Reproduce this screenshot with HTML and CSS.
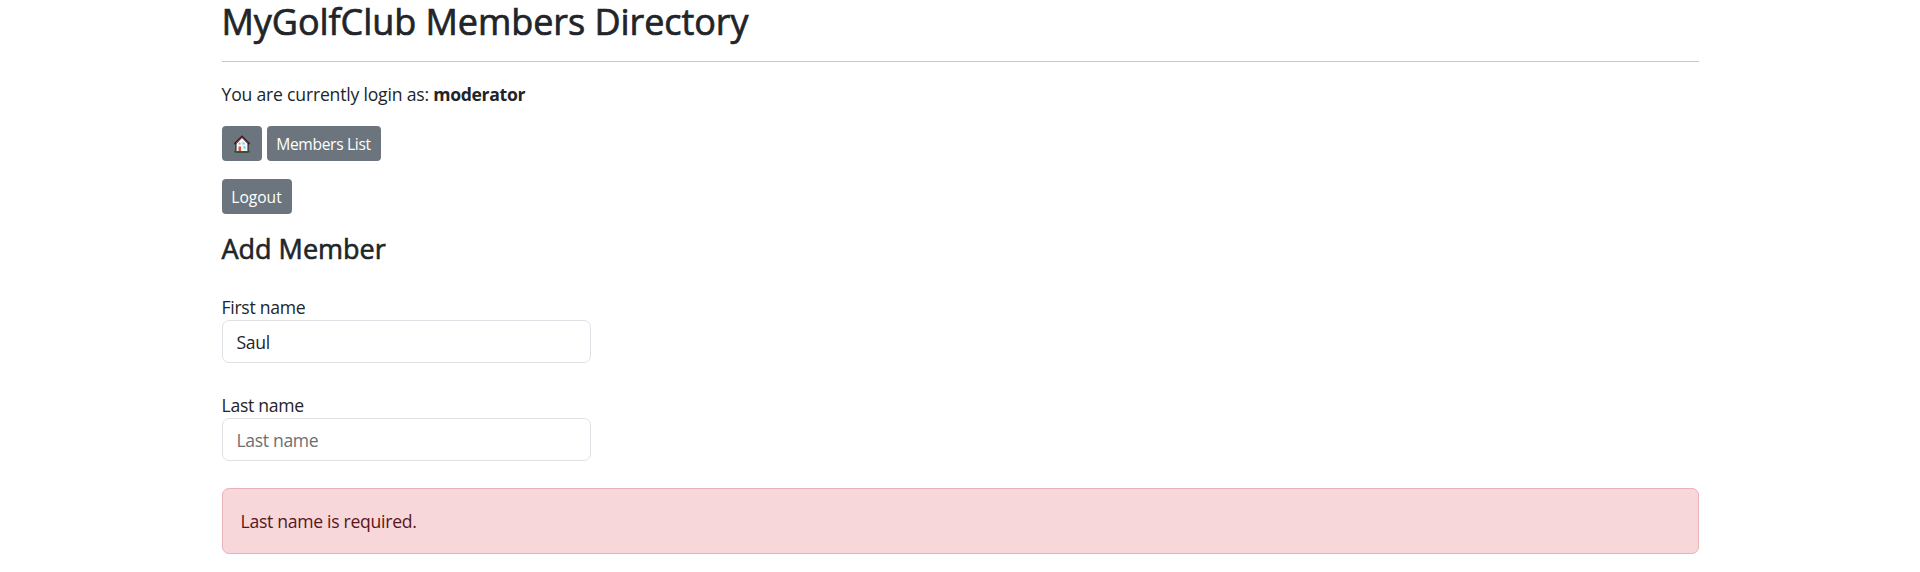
FILE: index.html
```
<!DOCTYPE html>
<html lang="en">
<head>
<meta charset="utf-8">
<title>MyGolfClub Members Directory</title>
<link rel="stylesheet" href="styles.css">
</head>
<body>
<main class="container">
  <h1 class="title">MyGolfClub Members Directory</h1>
  <p class="status">You are currently login as: <strong>moderator</strong></p>
  <nav class="actions">
    <a class="btn btn-home" aria-label="Home"><svg class="home" viewBox="0 0 18 18">
      <path d="M3 8.500 9 2l6 6.500V17H3z" fill="#f4f8fa" stroke="#17191b"/>
      <path d="M1.500 9 9 1.500 16.500 9" fill="none" stroke="#321f20" stroke-width="1.800"/>
      <path d="M3 8 9 2.500 15 8" fill="none" stroke="#b9503f" stroke-width=".6"/>
      <path d="M5.500 7.500h2v2h-2zM9.500 7.500h2v2h-2zM10.500 11.500h2v2h-2z" fill="#6cc4e4"/>
      <path d="M5.500 11.500h2.500v4.500H5.500z" fill="#e3522f"/>
      <path d="M1 16h16v1.500H1z" fill="#146b25"/>
    </svg></a>
    <a class="btn btn-list">Members List</a>
  </nav>
  <nav class="actions"><a class="btn btn-logout">Logout</a></nav>
  <h2 class="subtitle">Add Member</h2>
  <form class="form">
    <div class="field">
      <label for="first">First name</label>
      <input class="control" id="first" type="text" placeholder="First name" value="Saul">
    </div>
    <div class="field">
      <label for="last">Last name</label>
      <input class="control" id="last" type="text" placeholder="Last name">
    </div>
    <div class="alert">Last name is required.</div>
  </form>
</main>
</body>
</html>
```
FILE: styles.css
```
* { box-sizing: border-box; }
body {
  margin: 0;
  background: #fff;
  color: #212529;
  font: 17.6px/27px "Segoe UI", "Open Sans", "Noto Sans", sans-serif;
  letter-spacing: -0.29px;
  overflow: hidden;
}
.container { width: 1477px; margin: 0 auto; }
.title {
  height: 62px;
  margin: 0;
  border-bottom: 1px solid #c4c6c8;
  font-size: 36px;
  font-weight: 500;
  line-height: 44px;
  letter-spacing: -0.06px;
  white-space: nowrap;
  -webkit-text-stroke: 0.7px #212529;
}
.status { height: 27px; margin: 19px 0 18px; letter-spacing: -0.2px; }
.status strong { letter-spacing: -0.32px; }
.actions { display: flex; gap: 5px; height: 35px; margin-bottom: 18px; }
.btn {
  display: flex;
  align-items: center;
  justify-content: center;
  height: 35px;
  border-radius: 4px;
  background: #6c757d;
  color: #fff;
  font-size: 15.6px;
  line-height: 24px;
  letter-spacing: 0;
  white-space: nowrap;
}
.btn-home { width: 40px; }
.btn-list { width: 114px; letter-spacing: -0.32px; }
.btn-logout { width: 70px; }
.home { width: 18px; height: 18px; }
.subtitle {
  height: 34px;
  margin: 0 0 26px;
  font-size: 27px;
  font-weight: 500;
  line-height: 34px;
  letter-spacing: 0;
  -webkit-text-stroke: 0.6px #212529;
}
.field { margin-bottom: 27px; }
.field label { display: block; height: 28px; line-height: 30px; }
.control {
  display: block;
  width: 369px;
  height: 43px;
  padding: 0 14px;
  border: 1px solid #dee2e6;
  border-radius: 7px;
  background: #fff;
  color: #212529;
  font: inherit;
  letter-spacing: -0.35px;
}
.control::placeholder { color: #6b6f73; opacity: 1; }
.alert {
  height: 66px;
  padding: 19px 18px;
  border: 1px solid #e9b1b8;
  border-radius: 7px;
  background: #f7d7da;
  color: #58151c;
}
```
